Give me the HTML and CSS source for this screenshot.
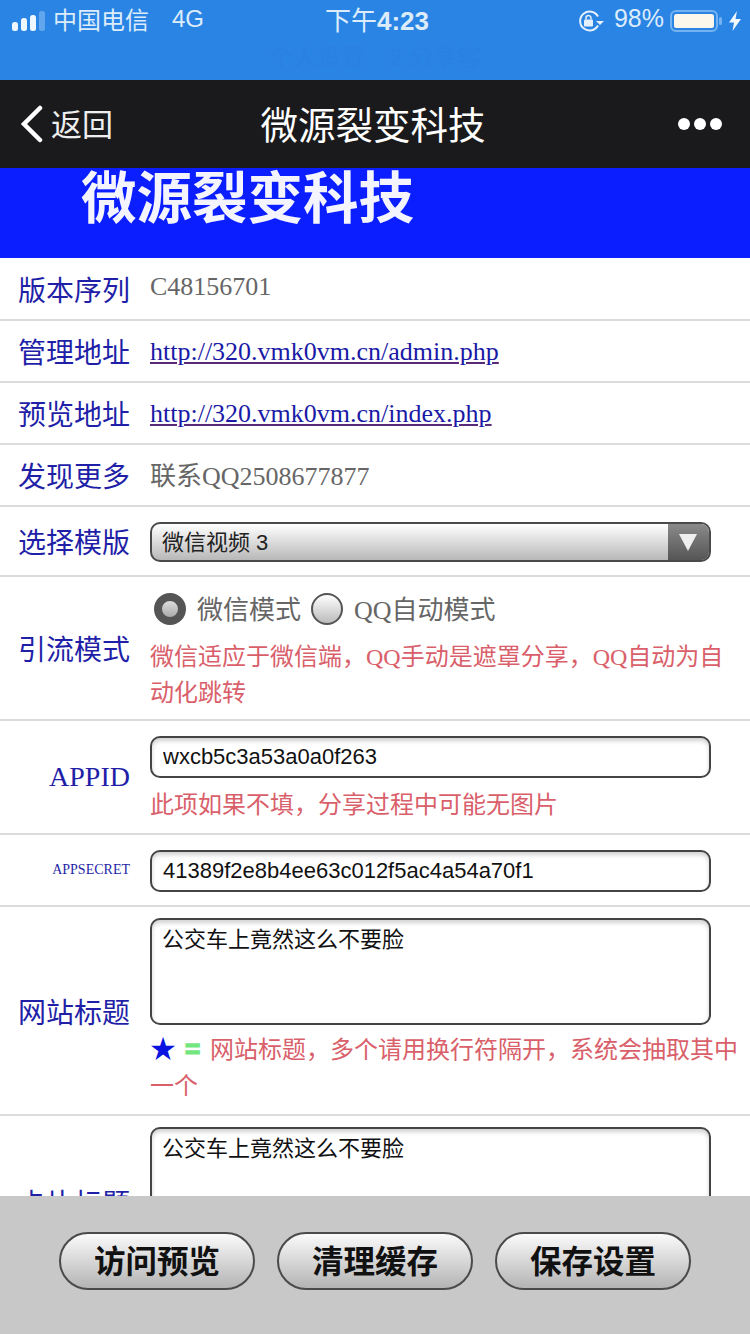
FILE: index.html
```html
<!DOCTYPE html>
<html lang="zh-CN">
<head>
    <meta charset="UTF-8">
    <meta name="viewport" content="width=device-width, initial-scale=1.0">
    <title>微源裂变科技</title>
    <link rel="stylesheet" href="styles.css">
</head>
<body>
    <div class="status-bar">
        <div class="status-row">
            <div class="status-left">
                <svg class="signal" width="33" height="20" viewBox="0 0 33 20">
                    <rect x="0" y="11" width="6" height="9" rx="2.500" fill="#eef6fe"/>
                    <rect x="9" y="7" width="6" height="13" rx="2.500" fill="#eef6fe"/>
                    <rect x="18" y="4" width="6" height="16" rx="2.500" fill="#eef6fe"/>
                    <rect x="27" y="0" width="6" height="20" rx="2.500" fill="#62a6ee"/>
                </svg>
                <span class="carrier">中国电信</span>
                <span class="network">4G</span>
            </div>
            <div class="status-time">下午<b>4:23</b></div>
            <div class="status-right">
                <svg width="26" height="24" viewBox="0 0 26 24" fill="none">
                    <path d="M20 16.500a9.500 9.500 0 1 1 0-9" stroke="#e4f0fc" stroke-width="2"/>
                    <path d="M18 12h8l-4 4z" fill="#e4f0fc"/>
                    <rect x="6" y="10.500" width="9" height="7" rx="1" fill="#e4f0fc"/>
                    <path d="M8 10.500V9a2.500 2.500 0 0 1 5 0v1.500" stroke="#e4f0fc" stroke-width="1.500"/>
                </svg>
                <span class="battery-text">98%</span>
                <svg width="53" height="22" viewBox="0 0 53 22">
                    <rect x="1" y="1" width="46" height="20" rx="5" fill="none" stroke="#74b2f2" stroke-width="2"/>
                    <rect x="4" y="4" width="40" height="14" rx="2.500" fill="#fdf6ea"/>
                    <rect x="49" y="7" width="3" height="8" rx="1.500" fill="#74b2f2"/>
                </svg>
                <svg class="bolt" width="12" height="20" viewBox="0 0 12 20">
                    <path d="M8 0L0 11.500h5L3.500 20 12 8H6.500z" fill="#f2f8fe"/>
                </svg>
            </div>
        </div>
        <div class="status-ghost">个人设置　2 分享客</div>
    </div>

    <div class="nav-bar">
        <div class="nav-back">
            <svg width="24" height="38" viewBox="0 0 24 38" fill="none">
                <path d="M20 3L4 19l16 16" stroke="#fff" stroke-width="4.500" stroke-linecap="round"/>
            </svg>
            <span>返回</span>
        </div>
        <div class="nav-title">微源裂变科技</div>
        <div class="nav-more"><i></i><i></i><i></i></div>
    </div>

    <div class="banner">微源裂变科技</div>

    <div class="form-list">
        <div class="row row-text row-version">
            <div class="row-label">版本序列</div>
            <div class="row-value">C48156701</div>
        </div>
        <div class="row row-text">
            <div class="row-label">管理地址</div>
            <div class="row-value"><a href="#">http://320.vmk0vm.cn/admin.php</a></div>
        </div>
        <div class="row row-text">
            <div class="row-label">预览地址</div>
            <div class="row-value"><a href="#">http://320.vmk0vm.cn/index.php</a></div>
        </div>
        <div class="row row-text row-more">
            <div class="row-label">发现更多</div>
            <div class="row-value">联系QQ2508677877</div>
        </div>
        <div class="row row-select">
            <div class="row-label">选择模版</div>
            <div class="row-value">
                <div class="select-box">
                    <span>微信视频 3</span>
                    <div class="select-arrow"></div>
                </div>
            </div>
        </div>
        <div class="row row-mode">
            <div class="row-label">引流模式</div>
            <div class="row-value">
                <div class="radio-line">
                    <span class="radio checked"></span><span>微信模式</span>
                    <span class="radio"></span><span>QQ自动模式</span>
                </div>
                <div class="note">微信适应于微信端，QQ手动是遮罩分享，QQ自动为自动化跳转</div>
            </div>
        </div>
        <div class="row row-appid">
            <div class="row-label label-latin">APPID</div>
            <div class="row-value">
                <input class="field" type="text" value="wxcb5c3a53a0a0f263">
                <div class="note">此项如果不填，分享过程中可能无图片</div>
            </div>
        </div>
        <div class="row row-secret">
            <div class="row-label label-small">APPSECRET</div>
            <div class="row-value">
                <input class="field" type="text" value="41389f2e8b4ee63c012f5ac4a54a70f1">
            </div>
        </div>
        <div class="row row-area">
            <div class="row-label">网站标题</div>
            <div class="row-value">
                <textarea class="field area">公交车上竟然这么不要脸</textarea>
                <div class="note"><span class="star">★</span><span class="equals">=</span>网站标题，多个请用换行符隔开，系统会抽取其中一个</div>
            </div>
        </div>
        <div class="row row-area row-last">
            <div class="row-label">卡片标题</div>
            <div class="row-value">
                <textarea class="field area">公交车上竟然这么不要脸</textarea>
            </div>
        </div>
    </div>

    <div class="bottom-bar">
        <button>访问预览</button>
        <button>清理缓存</button>
        <button>保存设置</button>
    </div>
</body>
</html>
```

FILE: styles.css
```css
* {
    margin: 0;
    padding: 0;
    box-sizing: border-box;
}

html, body {
    height: 1334px;
    overflow: hidden;
}

body {
    background: #fff;
    font-family: "Liberation Serif", "Noto Sans CJK SC", serif;
}

.status-bar {
    height: 80px;
    background: #2a84e4;
    color: #dcecfb;
    font-family: "Liberation Sans", "Noto Sans CJK SC", sans-serif;
}

.status-row {
    height: 40px;
    padding: 0 9px 0 12px;
    display: grid;
    grid-template-columns: 1fr auto 1fr;
    align-items: center;
    font-size: 24px;
}

.status-left, .status-right {
    display: flex;
    align-items: center;
}

.status-left span, .status-time, .battery-text {
    padding-bottom: 4px;
}

.status-right {
    justify-content: flex-end;
}

.carrier {
    margin-left: 8px;
}

.network {
    margin-left: 23px;
}

.status-time {
    font-size: 26px;
    margin-left: 1px;
}

.status-time b {
    font-weight: 700;
}

.battery-text {
    margin: 0 6px 0 10px;
    font-size: 25px;
}

.bolt {
    margin-left: 6px;
}

.status-ghost {
    text-align: center;
    font-size: 24px;
    line-height: 36px;
    color: #2a81e1;
}

.nav-bar {
    height: 88px;
    background: #1a1a1c;
    color: #fff;
    padding: 0 28px 0 20px;
    display: grid;
    grid-template-columns: 1fr auto 1fr;
    align-items: center;
    font-family: "Liberation Sans", "Noto Sans CJK SC", sans-serif;
}

.nav-back {
    display: flex;
    align-items: center;
    gap: 7px;
    font-size: 31px;
    color: #eee;
}

.nav-back span {
    padding-bottom: 4px;
}

.nav-title {
    font-size: 37.500px;
    padding-bottom: 4px;
    margin-left: 4px;
}

.nav-more {
    display: flex;
    justify-content: flex-end;
    gap: 4px;
}

.nav-more i {
    width: 12px;
    height: 12px;
    border-radius: 50%;
    background: #fff;
}

.banner {
    height: 90px;
    background: #0a1eff;
    color: #f4f4ff;
    padding-left: 81px;
    font-family: "Liberation Sans", "Noto Sans CJK SC", sans-serif;
    font-size: 55.500px;
    font-weight: 700;
    line-height: 62px;
}

.form-list {
    height: 938px;
    overflow: hidden;
}

.row {
    display: grid;
    grid-template-columns: 130px 1fr;
    column-gap: 20px;
    align-items: center;
    padding-right: 10px;
    border-bottom: 2px solid #dcdcdc;
}

.row-label {
    text-align: right;
    font-size: 28px;
    color: #1f1fa8;
}

.label-small {
    font-size: 14px;
}

.row-value {
    font-size: 26px;
    color: #666;
}

.row-value a {
    color: #1a1aa6;
    text-decoration-color: #5a2a7a;
}

.row-text {
    height: 62px;
}

.row-text .row-value {
    padding-top: 2px;
}

.row-version {
    height: 63px;
}

.row-version .row-value {
    padding: 0 0 4px;
}

.row-more .row-value {
    padding: 0 0 4px;
}

.row-select {
    height: 70px;
}

.row-mode {
    height: 144px;
}

.row-appid {
    height: 114px;
}

.row-secret {
    height: 72px;
}

.row-secret .field {
    margin-top: 2px;
}

.row-area {
    padding-top: 11px;
    padding-bottom: 10px;
}

.row-last {
    align-items: start;
    height: 173px;
}

.row-last .row-label {
    padding-top: 55px;
}

.select-box {
    width: 561px;
    height: 40px;
    margin-top: 2px;
    border: 2px solid #4a4a4a;
    border-radius: 10px;
    overflow: hidden;
    display: flex;
    align-items: center;
    justify-content: space-between;
    background: linear-gradient(#fff, #b8b8b8);
    padding-left: 10px;
    font-family: "Liberation Sans", "Noto Sans CJK SC", sans-serif;
    font-size: 22px;
    color: #222;
}

.select-box span {
    padding-bottom: 4px;
}

.select-arrow {
    width: 41px;
    height: 100%;
    background: linear-gradient(#8a8a8a, #555);
    position: relative;
}

.select-arrow::after {
    content: "";
    position: absolute;
    left: 11px;
    top: 10px;
    border-left: 9px solid transparent;
    border-right: 9px solid transparent;
    border-top: 17px solid #eee;
}

.radio-line {
    display: flex;
    align-items: center;
    font-size: 26px;
    color: #666;
    height: 36px;
    margin: 4px 0 14px;
}

.radio {
    width: 32px;
    height: 32px;
    flex: none;
    border-radius: 50%;
    border: 2px solid #555;
    background: linear-gradient(#fff, #bbb);
    margin: 3px 11px 0 4px;
}

.radio:nth-child(3) {
    margin-left: 10px;
}

.radio.checked {
    border: 8px solid #555;
    background: linear-gradient(#ddd, #aaa);
}

.note {
    font-size: 24px;
    line-height: 36px;
    color: #d9606a;
}

.field {
    display: block;
    width: 561px;
    height: 42px;
    border: 2px solid #444;
    border-radius: 10px;
    padding: 0 11px;
    background: #fff;
    box-shadow: inset 0 3px 4px rgba(0, 0, 0, 0.18);
    font-family: "Liberation Sans", "Noto Sans CJK SC", sans-serif;
    font-size: 22px;
    color: #111;
    outline: none;
}

.row-appid .field {
    margin: 4px 0 9px;
}

.area {
    height: 107px;
    padding: 6px 10px;
    resize: none;
    line-height: 28px;
}

.row-area .note {
    margin-top: 7px;
}

.star {
    display: inline-block;
    width: 26px;
    margin-right: 9px;
    line-height: 1;
    font-size: 26px;
    color: #0a14e0;
}

.equals {
    display: inline-block;
    width: 16px;
    margin-right: 9px;
    line-height: 1;
    font-family: "Liberation Sans", sans-serif;
    font-size: 26px;
    font-weight: 700;
    color: #74e680;
    -webkit-text-stroke: 1.500px #74e680;
}

.bottom-bar {
    height: 138px;
    background: #c8c8c8;
    display: flex;
    justify-content: center;
    align-items: center;
    gap: 22px;
    padding-bottom: 8px;
}

.bottom-bar button {
    width: 196px;
    height: 58px;
    padding-bottom: 4px;
    border: 2px solid #4a4a4a;
    border-radius: 29px;
    background: linear-gradient(#fafafa, #b4b4b4);
    font-family: "Liberation Sans", "Noto Sans CJK SC", sans-serif;
    font-size: 31.500px;
    font-weight: 700;
    color: #111;
}
```
